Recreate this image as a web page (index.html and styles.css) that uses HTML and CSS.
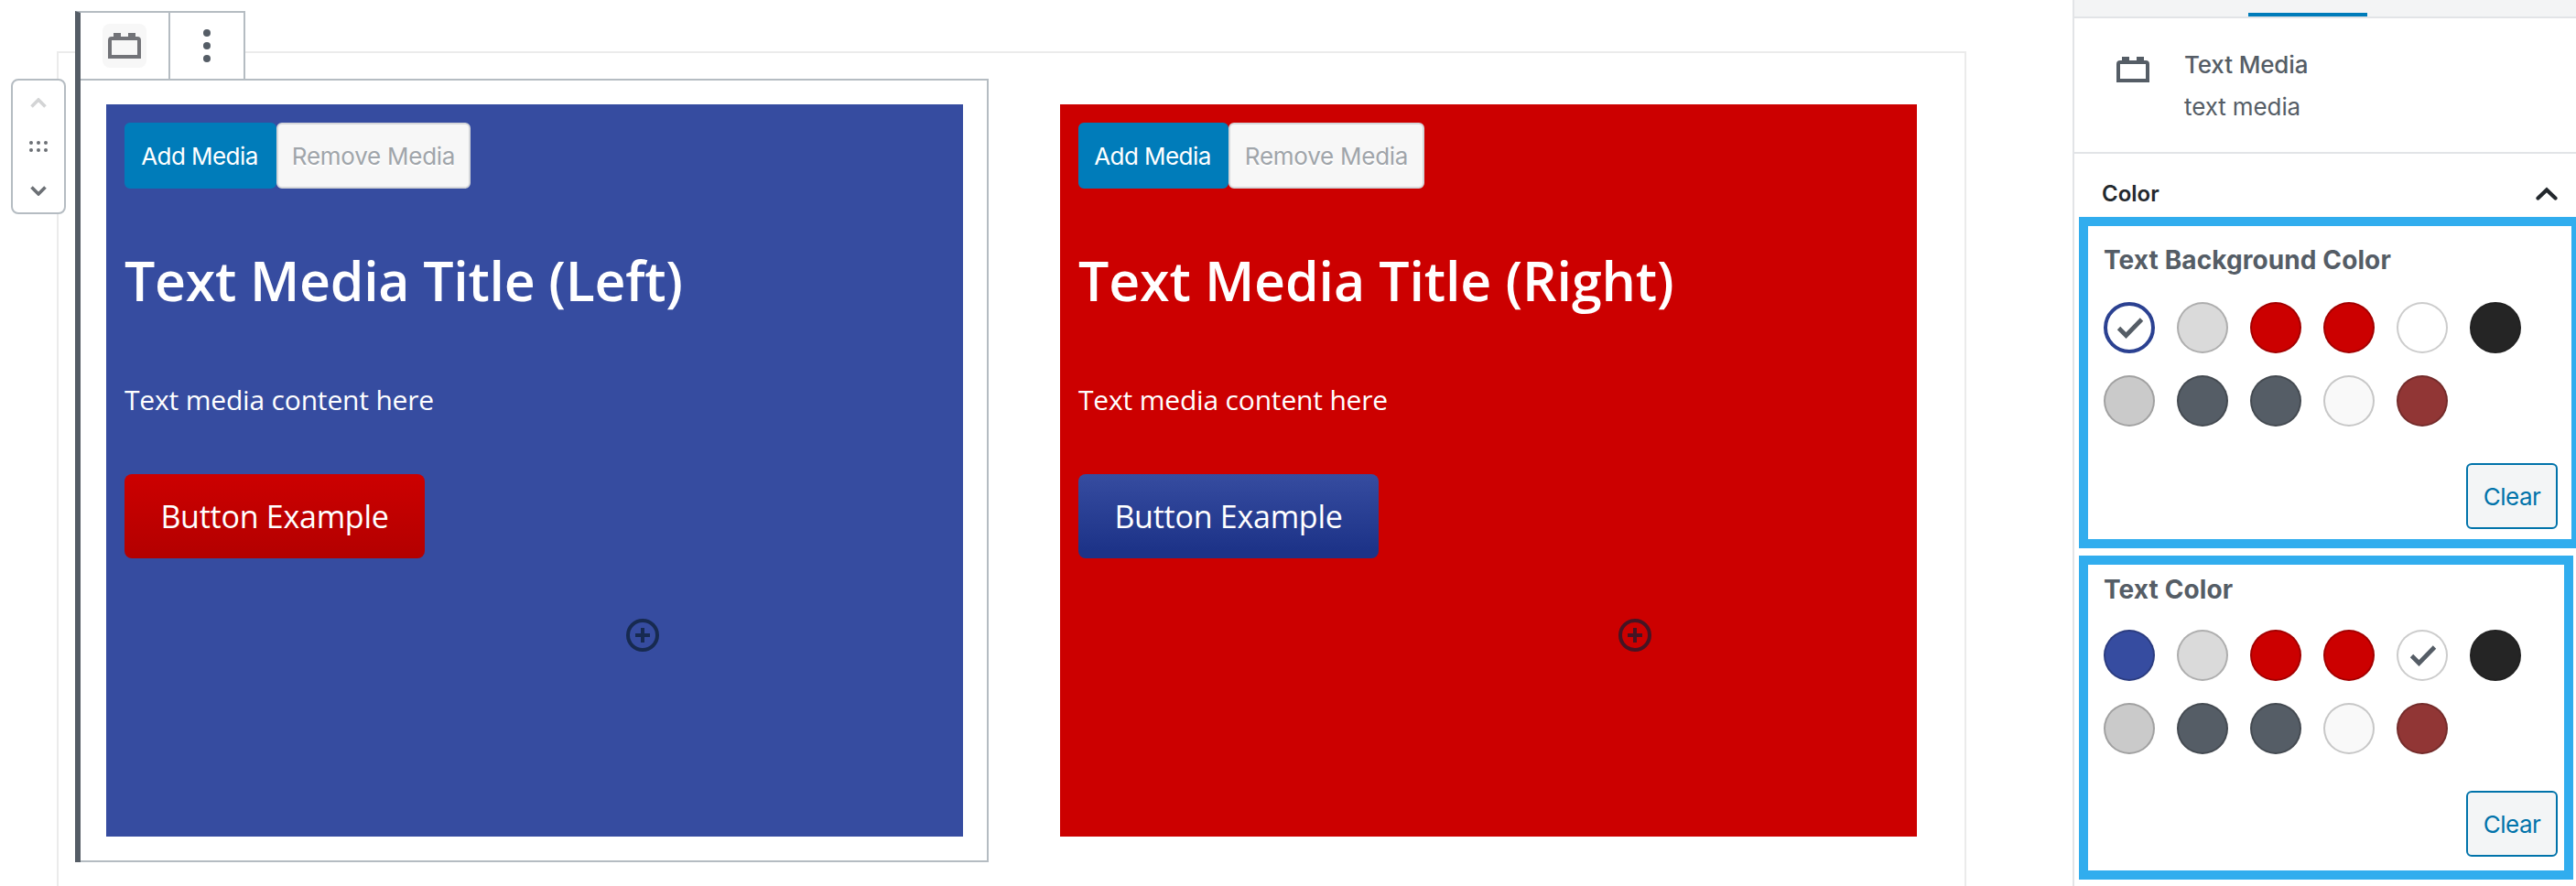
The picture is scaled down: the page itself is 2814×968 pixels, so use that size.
FILE: index.html
```
<!DOCTYPE html>
<html lang="en">
<head>
<meta charset="utf-8">
<title>Text Media block editor</title>
<link rel="stylesheet" href="styles.css">
</head>
<body>
<div class="editor">
  <main class="canvas">
    <div class="mover">
      <svg class="chevron chevron-off" viewBox="0 0 18 11"><path d="M1.5 9.5 9 2l7.500 7.500"/></svg>
      <svg class="grip" viewBox="0 0 20 12"><circle cx="2" cy="2" r="2"/><circle cx="10" cy="2" r="2"/><circle cx="18" cy="2" r="2"/><circle cx="2" cy="10" r="2"/><circle cx="10" cy="10" r="2"/><circle cx="18" cy="10" r="2"/></svg>
      <svg class="chevron" viewBox="0 0 18 11"><path d="M1.500 1.500 9 9l7.500-7.500"/></svg>
    </div>
    <div class="toolbar">
      <div class="tool tool-block"><span class="tool-badge"><svg class="brick" viewBox="0 0 36 28"><path fill-rule="evenodd" d="M6 0h8v4h8V0h8v4h2a4 4 0 0 1 4 4v20H0V8a4 4 0 0 1 4-4h2zM4 8v16h28V8z"/></svg></span></div>
      <div class="tool tool-more"><svg class="dots" viewBox="0 0 8 36"><circle cx="4" cy="4" r="4"/><circle cx="4" cy="18" r="4"/><circle cx="4" cy="32" r="4"/></svg></div>
    </div>
    <section class="columns">
      <div class="block block-selected">
        <article class="card card-blue">
          <div class="media-buttons"><button class="btn add">Add Media</button><button class="btn remove">Remove Media</button></div>
          <h2 class="title title-left">Text Media Title (Left)</h2>
          <p class="content">Text media content here</p>
          <a class="cta cta-red">Button Example</a>
          <svg class="plus plus-left" viewBox="0 0 36 36"><circle cx="18" cy="18" r="16"/><path d="M18 10v16M10 18h16"/></svg>
        </article>
      </div>
      <div class="block block-idle">
        <article class="card card-red">
          <div class="media-buttons"><button class="btn add">Add Media</button><button class="btn remove">Remove Media</button></div>
          <h2 class="title title-right">Text Media Title (Right)</h2>
          <p class="content">Text media content here</p>
          <a class="cta cta-blue">Button Example</a>
          <svg class="plus plus-right" viewBox="0 0 36 36"><circle cx="18" cy="18" r="16"/><path d="M18 10v16M10 18h16"/></svg>
        </article>
      </div>
    </section>
  </main>
  <aside class="sidebar">
    <div class="tabs"><span class="tab-active"></span></div>
    <header class="block-info">
      <svg class="brick brick-side" viewBox="0 0 36 28"><path fill-rule="evenodd" d="M6 0h8v4h8V0h8v4h2a4 4 0 0 1 4 4v20H0V8a4 4 0 0 1 4-4h2zM4 8v16h28V8z"/></svg>
      <div>
        <div class="info-title">Text Media</div>
        <div class="info-desc">text media</div>
      </div>
    </header>
    <div class="panel-head"><span>Color</span><svg class="caret" viewBox="0 0 24 16"><path d="M2.500 12.500 12 3.500l9.500 9"/></svg></div>
    <section class="picker picker-bg">
      <h3 class="picker-title">Text Background Color</h3>
      <div class="swatches">
        <i class="sw ring"><svg class="check" viewBox="0 0 30 24"><path d="M2.500 12.500 10.500 20.500 27.500 3"/></svg></i><i class="sw silver"></i><i class="sw red"></i><i class="sw red"></i><i class="sw white"></i><i class="sw black"></i>
        <i class="sw gray"></i><i class="sw slate"></i><i class="sw slate"></i><i class="sw pale"></i><i class="sw brick-red"></i>
      </div>
      <button class="clear">Clear</button>
    </section>
    <section class="picker picker-text">
      <h3 class="picker-title">Text Color</h3>
      <div class="swatches">
        <i class="sw blue"></i><i class="sw silver"></i><i class="sw red"></i><i class="sw red"></i><i class="sw white"><svg class="check" viewBox="0 0 30 24"><path d="M2.500 12.500 10.500 20.500 27.500 3"/></svg></i><i class="sw black"></i>
        <i class="sw gray"></i><i class="sw slate"></i><i class="sw slate"></i><i class="sw pale"></i><i class="sw brick-red"></i>
      </div>
      <button class="clear">Clear</button>
    </section>
  </aside>
</div>
</body>
</html>
```
FILE: styles.css
```
* { box-sizing: border-box; }
body { margin: 0; background: #fff; font-family: Inter, "Liberation Sans", sans-serif; color: #555d66; }
h2, h3, p { margin: 0; }
svg { display: block; flex: none; }
button { font: inherit; margin: 0; padding: 0; white-space: nowrap; }

.editor { display: flex; width: 2814px; height: 968px; overflow: hidden; }
.canvas { position: relative; width: 2264px; padding: 56px 116px 0 62px; }

/* Editing area */
.columns { display: flex; gap: 50px; height: 920px; border: 2px solid #ebebeb; padding: 28px 0 0 18px; }
.block { flex: none; height: 856px; border: 2px solid transparent; padding: 26px; }
.block-selected { width: 998px; padding-left: 28px; border-color: #b5bcc2; border-left: 6px solid transparent; }
.block-idle { width: 992px; }
.card { display: flex; flex-direction: column; align-items: flex-start; width: 936px; height: 800px; padding: 20px; color: #fff; }
.card-blue { background: #364ca0; }
.card-red { background: #cc0000; }

.media-buttons { display: flex; }
.btn { height: 72px; border-radius: 6px; font-size: 26px; }
.add { width: 166px; padding-right: 2px; border: 2px solid #007cba; background: #007cba; color: #fff; letter-spacing: -.55px; }
.remove { width: 212px; border: 2px solid #d5d7da; background: #f7f7f7; color: #a0a5aa; letter-spacing: -.25px; text-shadow: 0 2px 0 #fff; }
.card-red .add { width: 164px; }
.card-red .remove { width: 214px; }
.title { margin-top: 60px; font: 600 59px/80px "Open Sans", sans-serif; white-space: nowrap; }
.title-left { letter-spacing: -.3px; }
.title-right { letter-spacing: -.12px; }
.content { margin-top: 67px; font: 400 30px/48px "Open Sans", sans-serif; letter-spacing: -.18px; white-space: nowrap; }
.cta { display: flex; align-items: center; justify-content: center; width: 328px; height: 92px; margin-top: 57px; border-radius: 8px; font: 400 34px/48px "Open Sans", sans-serif; letter-spacing: -.25px; }
.cta-red { background: linear-gradient(#cc0000, #b30000); }
.cta-blue { background: linear-gradient(#364ca0, #1d3388 90%); }
.plus { width: 36px; height: 36px; margin-top: 66px; fill: none; stroke-width: 4; }
.plus-left { margin-left: 548px; stroke: #172a50; }
.plus-right { margin-left: 590px; stroke: #451423; }

/* Floating block controls */
.mover { position: absolute; left: 12px; top: 86px; z-index: 2; display: flex; flex-direction: column; align-items: center; width: 60px; height: 148px; padding-top: 19px; border: 2px solid #b5bcc2; border-radius: 8px; background: #fff; }
.chevron { width: 18px; height: 11px; fill: none; stroke: #6c7075; stroke-width: 3.600; }
.chevron-off { stroke: #d3d4d5; }
.grip { width: 20px; height: 12px; margin: 36px 0 37px; fill: #6c7075; }
.toolbar { position: absolute; left: 82px; top: 12px; z-index: 1; display: flex; width: 186px; height: 76px; border: 2px solid #b5bcc2; border-left: 6px solid #555d66; background: #fff; }
.toolbar::after { content: ""; position: absolute; left: -6px; top: 72px; width: 6px; height: 856px; background: #555d66; }
.tool { display: flex; align-items: center; justify-content: center; }
.tool-block { width: 98px; border-right: 2px solid #b5bcc2; }
.tool-badge { display: flex; align-items: center; justify-content: center; width: 48px; height: 48px; border-radius: 8px; background: #f7f7f7; }
.tool-more { width: 80px; }
.brick { width: 36px; height: 28px; fill: #727378; }
.dots { width: 8px; height: 36px; fill: #555d66; }

/* Settings sidebar */
.sidebar { width: 550px; border-left: 2px solid #e2e4e7; }
.tabs { height: 20px; padding: 14px 0 0 190px; border-bottom: 2px solid #e2e4e7; background: #f3f4f5; }
.tab-active { display: block; width: 130px; height: 4px; background: #007cba; }
.block-info { display: flex; gap: 38px; height: 148px; padding: 28px 0 0 46px; border-bottom: 2px solid #e2e4e7; }
.brick-side { margin-top: 14px; fill: #555d66; }
.info-title { font-size: 26px; font-weight: 500; line-height: 46px; letter-spacing: -.15px; }
.info-desc { font-size: 26px; line-height: 46px; letter-spacing: -.1px; }
.panel-head { display: flex; align-items: center; justify-content: space-between; height: 69px; padding: 18px 20px 0 30px; color: #23282d; font-size: 24px; font-weight: 600; line-height: 50px; }
.caret { width: 24px; height: 16px; fill: none; stroke: #23282d; stroke-width: 4.200; stroke-linecap: round; }
.picker { display: flex; flex-direction: column; margin-left: 5px; border: 10px solid #31adee; }
.picker-bg { width: 548px; height: 362px; padding: 17px 15px 0 17px; }
.picker-text { width: 540px; height: 354px; margin-top: 8px; padding: 7px 7px 0 17px; }
.picker-title { font-size: 28px; font-weight: 700; line-height: 40px; letter-spacing: .1px; white-space: nowrap; }
.swatches { display: grid; grid-template-columns: repeat(6, 56px); gap: 24px; margin-top: 26px; }
.picker-text .swatches { margin-top: 24px; }
.sw { display: flex; align-items: center; justify-content: center; width: 56px; height: 56px; border: 2px solid rgba(0, 0, 0, .2); border-radius: 50%; }
.ring { border: 4px solid #2b4191; background: #fff; }
.silver { background: #dadada; }
.red { background: #cc0000; }
.white { background: #fff; }
.black { background: #252525; border-color: #222; }
.gray { background: #cacaca; }
.slate { background: #555d66; }
.pale { background: #f9f9f9; }
.brick-red { background: #913635; }
.blue { background: #364ca0; }
.check { width: 30px; height: 24px; margin-left: 2px; fill: none; stroke: #555d66; stroke-width: 4.800; }
.clear { align-self: flex-end; width: 100px; height: 72px; margin-top: 40px; border: 2px solid #0073aa; border-radius: 6px; background: #f3f5f6; color: #0073aa; font-size: 26px; letter-spacing: -.5px; }
```
